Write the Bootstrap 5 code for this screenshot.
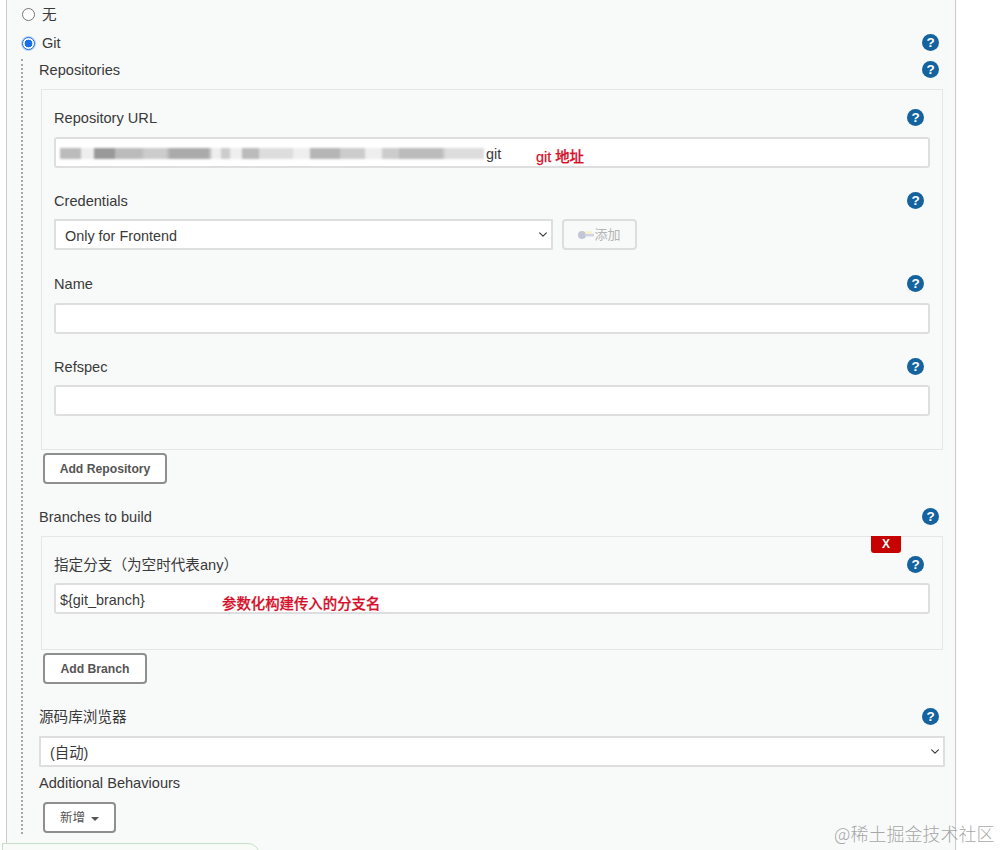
<!DOCTYPE html>
<html lang="zh-CN">
<head>
<meta charset="utf-8">
<title>Git 配置</title>
<link rel="stylesheet" href="https://cdn.jsdelivr.net/npm/bootstrap@5.3.0/dist/css/bootstrap.min.css">
<style>
html,body{height:850px;overflow:hidden;background:#fff}
body{font-family:"Liberation Sans","Noto Sans CJK SC",sans-serif;font-size:14.6px;color:#3a3a3a}
.sheet{margin-left:6px;width:950px;height:850px;background:#f8f9f9;border-left:1px solid #ccc;border-right:1px solid #ccc;padding-left:15px;box-sizing:border-box}
.row-plain{padding-right:16px}
.h-r1{height:30px}
.h-r2{height:27px}
.h-r1 label{padding-top:2px}
.radio-x{width:13px;height:13px;margin:0 7px 0 0;border-color:#777;flex:none}
.h-r1 .radio-x{margin-top:-1px}
.radio-x:checked{background-color:#fff;background-image:radial-gradient(circle,#1a6fe8 0 3.6px,#fff 4.2px);border:1px solid #1a6fe8;box-shadow:0 0 0 1px #b9d2f5}
.h-r2 .help-dot{margin-top:-2px}
.nest{margin:2px 0 0 -1px;border-left:2px dotted #a8a8a8;padding:0 10px 0 16px;height:775px}
.tag-row{height:20px;margin-right:6px}
.tag-row>span:first-child,.fld-tag>span:first-child{padding-top:4px}
.first-tag{height:22px;margin-bottom:8px}
.first-tag>span:first-child{padding-top:2px}
.first-tag .help-dot{margin-top:-2px}
.sub-box{background:#f8f9f9;border:1px solid #e6e6e6;margin:0 2px;padding:17px 12px 33px;position:relative}
.sub-box.short{padding-bottom:35px}
.fld-tag{height:20px;margin-right:6px}
.mb-10{margin-bottom:10px}
.mb-9{margin-bottom:9px}
.mb-22{margin-bottom:22px}
.mb-23{margin-bottom:23px}
.fld,.fld:disabled{height:31px;border:2px solid #dedede;border-radius:3px;font-size:14.4px;color:#3a3a3a;padding:2px 4px 0;background-color:#fff;box-shadow:none}
.fld-select{height:31px;border:2px solid #dedede;border-radius:1px;font-size:14.4px;color:#3a3a3a;padding:4px 24px 0 9px;background-position:right 2px center;background-size:12px 9px;box-shadow:none;font-family:inherit}
.w-cred{width:499px}
.key-btn{width:75px;height:31px;margin-left:9px;border:2px solid #ddd;border-radius:4px;background:#f8f9f9;color:#b4b4b4;font-size:13px;padding:0;display:flex;align-items:center;justify-content:center;gap:0}
.act-btn{height:31px;margin:3px 0 0 4px;display:flex;align-items:center;justify-content:center;border:2px solid #8f8f8f;border-radius:4px;background:#fff;color:#555;font-size:12.2px;font-weight:700;padding:2px 0 0}
.act-btn:hover{background:#fff;color:#555;border-color:#8f8f8f}
.w-repo{width:124px}
.w-branch{width:104px}
.w-add{width:73px;margin-top:0;font-weight:400;font-size:12.5px}
.help-dot{width:17px;height:17px;border-radius:50%;background:#14639e;color:#fff;font-weight:700;font-size:13.5px;line-height:17px;text-align:center;flex:none}
.url-wrap{position:relative}
.url-fld,.url-fld:focus{padding-left:430px}
.blurred{position:absolute;left:6px;top:11px;width:424px;height:11px;filter:blur(1.3px);background:linear-gradient(90deg,#bbb 0 5%,#eee 5% 8%,#999 8% 13%,#bbb 13% 19%,#ccc 20% 25%,#aaa 26% 35%,#eee 36% 38%,#ccc 38% 40%,#eee 40% 43%,#bbb 43% 47%,#ddd 47% 55%,#eee 55% 59%,#b5b5b5 59% 66%,#ccc 66% 72%,#eee 72% 76%,#ccc 76% 80%,#bbb 80% 90%,#ddd 91% 100%)}
.note-red{position:absolute;color:#d5102a;font-weight:500;font-size:14.4px;white-space:nowrap;line-height:20px;pointer-events:none;-webkit-text-stroke:.25px #d5102a}
.note-url{left:482px;top:10px}
.note-branch{left:168px;top:11px}
.kill-x{position:absolute;top:-1px;right:41px;width:30px;height:17px;background:#c70000;color:#fff;font-size:12px;font-weight:700;line-height:17px;text-align:center;border-radius:0 0 3px 3px}
.gap-22{margin-top:22px;margin-bottom:10px}
.gap-23{margin-top:22px;margin-bottom:10px}
.gap-6{margin-top:5px;margin-bottom:10px}
.wide-select{width:906px}
.caret-x{display:inline-block;width:0;height:0;border-left:4px solid transparent;border-right:4px solid transparent;border-top:4px solid #555;margin-left:6px}
.watermark{position:absolute;left:834px;top:821px;font-size:18px;line-height:24px;color:rgba(110,110,110,.62);font-family:"Noto Sans CJK SC",sans-serif;font-weight:300;white-space:nowrap}
.toast-edge{position:absolute;left:2px;top:843px;width:258px;height:20px;background:#f8fbf8;border:1px solid #c5e0c5;border-radius:0 12px 0 0}
</style>
</head>
<body class="position-relative">
<div class="sheet">
  <div class="d-flex align-items-center h-r1 row-plain">
    <input class="form-check-input radio-x" type="radio" name="scm" id="scmNone">
    <label for="scmNone">无</label>
  </div>
  <div class="d-flex align-items-center h-r2 row-plain">
    <input class="form-check-input radio-x" type="radio" name="scm" id="scmGit" checked>
    <label for="scmGit">Git</label>
    <span class="help-dot ms-auto">?</span>
  </div>
  <div class="nest">
    <div class="d-flex justify-content-between align-items-center tag-row first-tag"><span>Repositories</span><span class="help-dot">?</span></div>
    <div class="sub-box">
      <div class="d-flex justify-content-between align-items-center fld-tag mb-10"><span>Repository URL</span><span class="help-dot">?</span></div>
      <div class="url-wrap mb-22">
        <input class="form-control fld url-fld" type="text" value="git" aria-label="Repository URL">
        <div class="blurred"></div>
        <span class="note-red note-url">git 地址</span>
      </div>
      <div class="d-flex justify-content-between align-items-center fld-tag mb-9"><span>Credentials</span><span class="help-dot">?</span></div>
      <div class="d-flex mb-23">
        <select class="form-select fld-select w-cred" aria-label="Credentials"><option>Only for Frontend</option></select>
        <button class="btn key-btn" type="button">
          <svg width="16" height="10" viewBox="0 0 16 10" aria-hidden="true"><circle cx="4" cy="5" r="4" fill="#c3c6d8"/><rect x="7" y="3.8" width="9" height="2.6" fill="#d0d3e2"/><rect x="7" y="1.4" width="7" height="2.4" fill="#f5f2c8"/></svg>添加
        </button>
      </div>
      <div class="d-flex justify-content-between align-items-center fld-tag mb-10"><span>Name</span><span class="help-dot">?</span></div>
      <input class="form-control fld mb-22" type="text" aria-label="Name">
      <div class="d-flex justify-content-between align-items-center fld-tag mb-9"><span>Refspec</span><span class="help-dot">?</span></div>
      <input class="form-control fld" type="text" aria-label="Refspec">
    </div>
    <button class="btn act-btn w-repo" type="button">Add Repository</button>
    <div class="d-flex justify-content-between align-items-center tag-row gap-22"><span>Branches to build</span><span class="help-dot">?</span></div>
    <div class="sub-box short">
      <span class="kill-x">X</span>
      <div class="d-flex justify-content-between align-items-center fld-tag mb-9"><span>指定分支（为空时代表any）</span><span class="help-dot">?</span></div>
      <div class="url-wrap">
        <input class="form-control fld" type="text" value="${git_branch}" aria-label="指定分支">
        <span class="note-red note-branch">参数化构建传入的分支名</span>
      </div>
    </div>
    <button class="btn act-btn w-branch" type="button">Add Branch</button>
    <div class="d-flex justify-content-between align-items-center tag-row gap-23"><span>源码库浏览器</span><span class="help-dot">?</span></div>
    <select class="form-select fld-select wide-select" aria-label="源码库浏览器"><option>(自动)</option></select>
    <div class="d-flex align-items-center tag-row gap-6"><span>Additional Behaviours</span></div>
    <button class="btn act-btn w-add" type="button">新增<span class="caret-x"></span></button>
  </div>
</div>
<div class="toast-edge"></div>
<div class="watermark">@稀土掘金技术社区</div>
<script src="https://cdn.jsdelivr.net/npm/bootstrap@5.3.0/dist/js/bootstrap.bundle.min.js"></script>
</body>
</html>
